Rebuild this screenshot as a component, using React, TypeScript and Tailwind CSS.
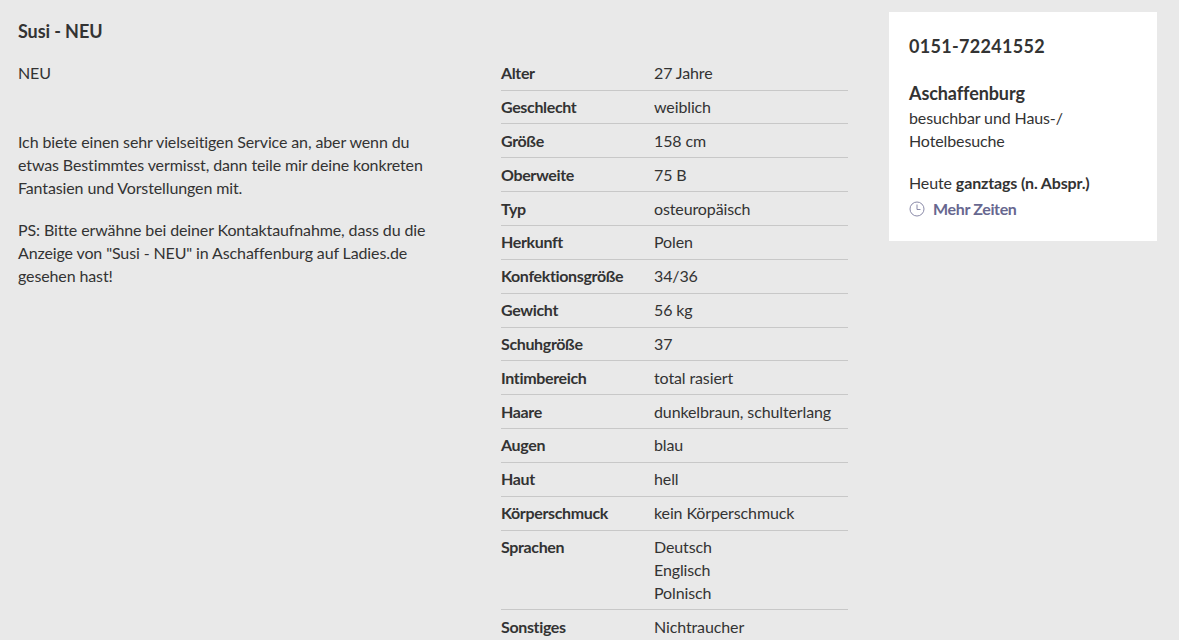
const details: [string, string[]][] = [
  ['Alter', ['27 Jahre']],
  ['Geschlecht', ['weiblich']],
  ['Größe', ['158 cm']],
  ['Oberweite', ['75 B']],
  ['Typ', ['osteuropäisch']],
  ['Herkunft', ['Polen']],
  ['Konfektionsgröße', ['34/36']],
  ['Gewicht', ['56 kg']],
  ['Schuhgröße', ['37']],
  ['Intimbereich', ['total rasiert']],
  ['Haare', ['dunkelbraun, schulterlang']],
  ['Augen', ['blau']],
  ['Haut', ['hell']],
  ['Körperschmuck', ['kein Körperschmuck']],
  ['Sprachen', ['Deutsch', 'Englisch', 'Polnisch']],
  ['Sonstiges', ['Nichtraucher']],
]

export default function App() {
  return (
    <div className="h-[640px] overflow-hidden bg-[#e9e9e9] text-[#333333] font-['Lato','Noto_Sans',sans-serif] text-[16px] leading-[22.857px] tracking-[-0.12px] flex">
      {/* Left: profile text */}
      <div className="w-[501px] shrink-0 pl-[18px] pt-[18px]">
        <h1 className="text-[18px] leading-[26px] font-bold tracking-[-0.1px] mb-[18px]">Susi - NEU</h1>
        <p className="mb-[46px]">NEU</p>
        <p className="w-[420px] mb-[19.5px]">
          Ich biete einen sehr vielseitigen Service an, aber wenn du etwas Bestimmtes vermisst, dann teile mir deine konkreten Fantasien und Vorstellungen mit.
        </p>
        <p className="w-[420px]">
          PS: Bitte erwähne bei deiner Kontaktaufnahme, dass du die Anzeige von "Susi - NEU" in Aschaffenburg auf Ladies.de gesehen hast!
        </p>
      </div>

      {/* Middle: details table */}
      <div className="w-[347px] shrink-0 pt-[56.8px]">
        {details.map(([label, values], i) => (
          <div
            key={label}
            className={`flex pt-[5.4px] pb-[4.6px] ${i < details.length - 1 ? 'border-b border-[#c8c8c8]' : ''}`}
          >
            <div className="w-[153px] shrink-0 font-bold tracking-[-0.35px]">{label}</div>
            <div>
              {values.map(v => (
                <div key={v}>{v}</div>
              ))}
            </div>
          </div>
        ))}
      </div>

      {/* Right: contact card */}
      <div className="pl-[41px] pt-[12px]">
        <div className="w-[268px] h-[229px] bg-white px-[20px] pt-[21px]">
          <div className="text-[18px] leading-[26px] font-bold tracking-[0.3px]">0151-72241552</div>
          <div className="text-[18px] leading-[26px] font-bold tracking-[-0.1px] mt-[21px]">Aschaffenburg</div>
          <div className="mt-[1px]">besuchbar und Haus-/<br />Hotelbesuche</div>
          <div className="mt-[19px]">
            Heute <span className="font-bold tracking-[-0.15px]">ganztags (n. Abspr.)</span>
          </div>
          <div className="flex items-center mt-[3px] font-bold tracking-[-0.35px] text-[#67678f]">
            <svg className="w-[16px] h-[16px] mr-[8px] shrink-0" viewBox="0 0 16 16" fill="none" stroke="#8a8aa8" strokeWidth="1">
              <circle cx="8" cy="8" r="7" />
              <path d="M8 3.5V8.5H11.5" />
            </svg>
            Mehr Zeiten
          </div>
        </div>
      </div>
    </div>
  )
}
